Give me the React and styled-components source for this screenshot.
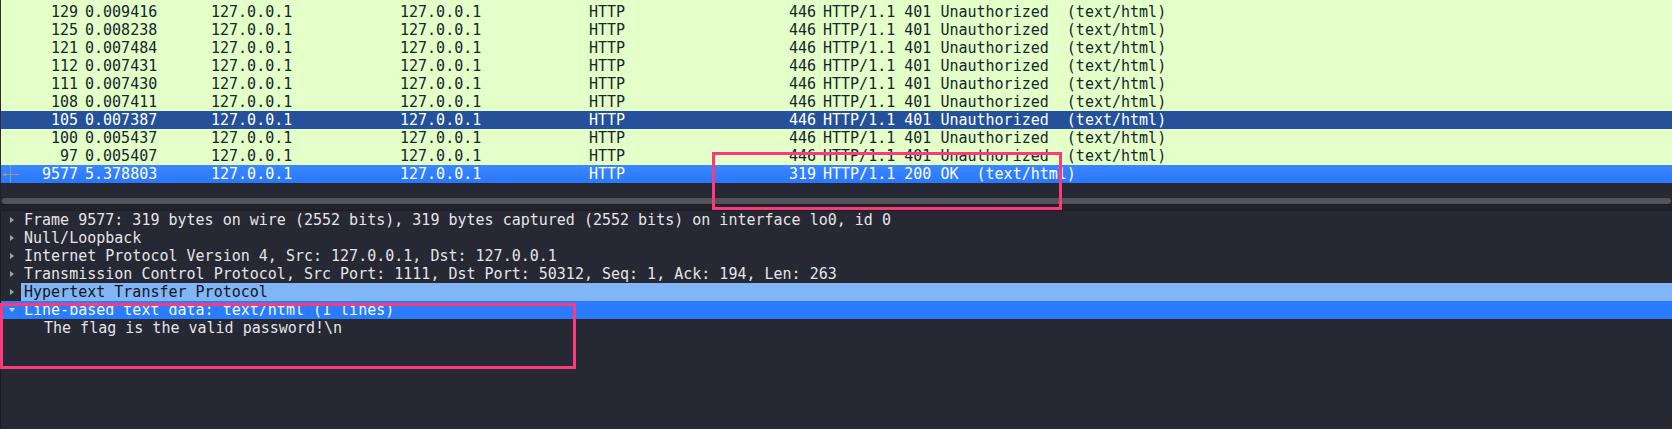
import styled, { createGlobalStyle } from "styled-components"

const GlobalStyle = createGlobalStyle`
    html, body {
        margin: 0;
        padding: 0;
        background: #262833;
    }
`

const packets = [
    { no: 129, time: "0.009416", len: 446, info: "HTTP/1.1 401 Unauthorized  (text/html)" },
    { no: 125, time: "0.008238", len: 446, info: "HTTP/1.1 401 Unauthorized  (text/html)" },
    { no: 121, time: "0.007484", len: 446, info: "HTTP/1.1 401 Unauthorized  (text/html)" },
    { no: 112, time: "0.007431", len: 446, info: "HTTP/1.1 401 Unauthorized  (text/html)" },
    { no: 111, time: "0.007430", len: 446, info: "HTTP/1.1 401 Unauthorized  (text/html)" },
    { no: 108, time: "0.007411", len: 446, info: "HTTP/1.1 401 Unauthorized  (text/html)" },
    { no: 105, time: "0.007387", len: 446, info: "HTTP/1.1 401 Unauthorized  (text/html)", state: "marked" },
    { no: 100, time: "0.005437", len: 446, info: "HTTP/1.1 401 Unauthorized  (text/html)" },
    { no: 97, time: "0.005407", len: 446, info: "HTTP/1.1 401 Unauthorized  (text/html)" },
    { no: 9577, time: "5.378803", len: 319, info: "HTTP/1.1 200 OK  (text/html)", state: "current", related: true },
]

const tree = [
    { text: "Frame 9577: 319 bytes on wire (2552 bits), 319 bytes captured (2552 bits) on interface lo0, id 0", toggle: "closed" },
    { text: "Null/Loopback", toggle: "closed" },
    { text: "Internet Protocol Version 4, Src: 127.0.0.1, Dst: 127.0.0.1", toggle: "closed" },
    { text: "Transmission Control Protocol, Src Port: 1111, Dst Port: 50312, Seq: 1, Ack: 194, Len: 263", toggle: "closed" },
    { text: "Hypertext Transfer Protocol", toggle: "closed", hl: "label" },
    { text: "Line-based text data: text/html (1 lines)", toggle: "open", hl: "row" },
    { text: "The flag is the valid password!\\n", level: 1 },
]

function RelatedMarker() {
    return (
        <Marker width="20" height="18" viewBox="0 0 20 18">
            <line x1="2" y1="9.5" x2="18" y2="9.5" stroke="#9c958a" strokeWidth="1" />
            <line x1="9.5" y1="0" x2="9.5" y2="18" stroke="#9c958a" strokeWidth="1" />
            <polygon points="1,9.5 5,7.5 5,11.5" fill="#9c958a" />
        </Marker>
    )
}

export default function App() {
    return (
        <>
            <GlobalStyle />
            <Window>
                <PacketList>
                    {packets.map((p) => (
                        <PacketRow key={p.no} $state={p.state}>
                            <NoCell>
                                {p.related && <RelatedMarker />}
                                {p.no}
                            </NoCell>
                            <TimeCell>{p.time}</TimeCell>
                            <AddrCell>127.0.0.1</AddrCell>
                            <AddrCell>127.0.0.1</AddrCell>
                            <ProtoCell>HTTP</ProtoCell>
                            <LenCell>{p.len}</LenCell>
                            <InfoCell>{p.info}</InfoCell>
                        </PacketRow>
                    ))}
                </PacketList>
                <ListFiller />
                <HScroll>
                    <HThumb />
                </HScroll>
                <Splitter />
                <DetailTree>
                    {tree.map((n, i) => (
                        <TreeRow key={i} $hl={n.hl}>
                            <Expander $level={n.level || 0}>
                                {n.toggle === "closed" && <ArrowRight />}
                                {n.toggle === "open" && <ArrowDown />}
                            </Expander>
                            <TreeLabel $hl={n.hl}>{n.text}</TreeLabel>
                        </TreeRow>
                    ))}
                </DetailTree>
                <Annotation $x={712} $y={152} $w={350} $h={58} />
                <Annotation $x={0} $y={303} $w={576} $h={66} />
            </Window>
        </>
    )
}

const Window = styled.div`
    position: relative;
    width: 1672px;
    height: 429px;
    overflow: hidden;
    display: flex;
    flex-direction: column;
    background: #262833;
    font-family: "DejaVu Sans Mono", "Liberation Mono", monospace;
    font-size: 15px;
    line-height: 18px;
`

const PacketList = styled.div`
    background: #e4ffc7;
    border-left: 1px solid #2b2d33;
    padding-top: 3px;
`

const PacketRow = styled.div`
    display: flex;
    height: 18px;
    white-space: pre;
    color: ${(p) => (p.$state ? "#ffffff" : "#12272e")};
    background: ${(p) =>
        p.$state === "marked" ? "#25509a" :
        p.$state === "current" ? "linear-gradient(#3a87ff, #2877ff)" :
        "transparent"};
`

const NoCell = styled.div`
    position: relative;
    width: 84px;
    padding-right: 7px;
    box-sizing: border-box;
    text-align: right;
`

const Marker = styled.svg`
    position: absolute;
    left: 0;
    top: 0;
`

const TimeCell = styled.div`
    width: 126px;
`

const AddrCell = styled.div`
    width: 189px;
`

const ProtoCell = styled.div`
    width: 148px;
`

const LenCell = styled.div`
    width: 86px;
    padding-right: 7px;
    box-sizing: border-box;
    text-align: right;
`

const InfoCell = styled.div`
    flex: 1;
`

const ListFiller = styled.div`
    height: 15px;
    border-left: 1px solid #1f2027;
`

const HScroll = styled.div`
    height: 6px;
    padding: 0 1px 0 2px;
`

const HThumb = styled.div`
    height: 100%;
    background: #525459;
    border-radius: 3px;
`

const Splitter = styled.div`
    height: 7px;
    background: #22232a;
    border-top: 1px solid #1c1d23;
    border-bottom: 1px solid #1c1d24;
    box-sizing: border-box;
`

const DetailTree = styled.div`
    flex: 1;
    background: #262833;
    border-left: 1px solid #1b1c22;
    color: #e4e4e6;
`

const TreeRow = styled.div`
    display: flex;
    height: 18px;
    white-space: pre;
    background: ${(p) => (p.$hl === "row" ? "#2a7cff" : "transparent")};
    color: ${(p) => (p.$hl === "row" ? "#f2f6ff" : "inherit")};
`

const Expander = styled.div`
    width: ${(p) => 20 + p.$level * 20}px;
    display: flex;
    align-items: center;
    padding-left: 8px;
    box-sizing: border-box;
`

const ArrowRight = styled.span`
    width: 0;
    height: 0;
    border-top: 3.5px solid transparent;
    border-bottom: 3.5px solid transparent;
    border-left: 4px solid #9fa2aa;
    margin-left: 1px;
`

const ArrowDown = styled.span`
    width: 0;
    height: 0;
    border-left: 3.5px solid transparent;
    border-right: 3.5px solid transparent;
    border-top: 4px solid #c8d8ff;
`

const TreeLabel = styled.div`
    flex: 1;
    padding-left: 3px;
    background: ${(p) => (p.$hl === "label" ? "#80b6f5" : "transparent")};
    color: ${(p) => (p.$hl === "label" ? "#12141a" : "inherit")};
`

const Annotation = styled.div`
    position: absolute;
    left: ${(p) => p.$x}px;
    top: ${(p) => p.$y}px;
    width: ${(p) => p.$w}px;
    height: ${(p) => p.$h}px;
    border: 3px solid #fc3a7b;
    box-sizing: border-box;
    pointer-events: none;
`
